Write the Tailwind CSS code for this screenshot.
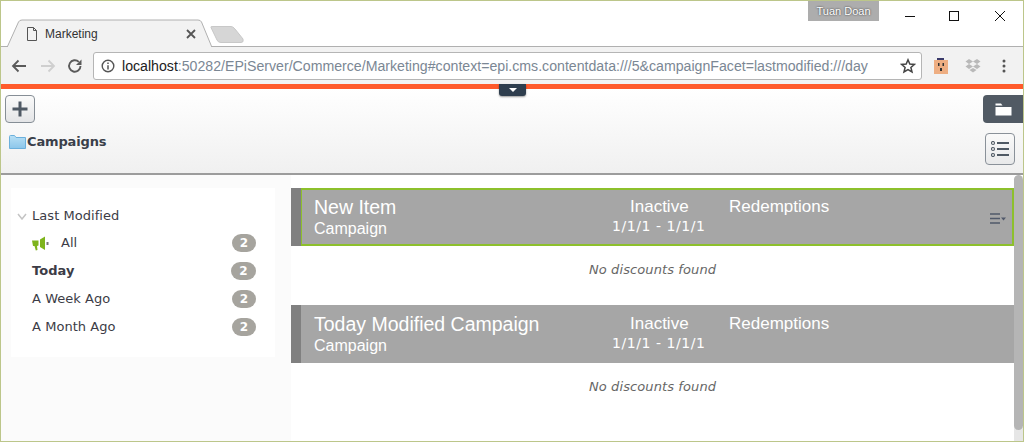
<!DOCTYPE html>
<html>
<head>
<script src="https://cdn.jsdelivr.net/npm/@tailwindcss/browser@4"></script>
</head>
<body class="m-0 overflow-hidden bg-white">
<div class="w-[1024px] h-[442px] flex flex-col border border-[#bcc68a] overflow-hidden relative font-['Liberation_Sans',sans-serif]">
  <!-- tab strip -->
  <div class="h-[46px] shrink-0 relative bg-white flex border-b border-[#b0b0b0]">
    <svg class="absolute left-0 top-[18px]" width="250" height="29" viewBox="0 0 250 29">
      <path d="M6 28.500 L17.500 3 Q18.500 1 21 1 L197 1 Q199.500 1 200.500 3 L211 28.500" fill="#f2f2f2" stroke="#b0b0b0"/>
      <path d="M210 8.500 Q209 7.500 212 7.500 L230 7.500 Q232 7.500 234 10 L242 20 Q243 23.500 240 23.500 L220 23.500 Q217 23.500 216 21 Z" fill="#d6d6d6" stroke="#c8c8c8"/>
    </svg>
    <div class="absolute left-[25px] top-[26px]">
      <svg width="12" height="14" viewBox="0 0 12 14"><path d="M1.500 .5 H7.500 L10.500 3.500 V13.500 H1.500 Z M7.500 .5 V3.500 H10.500" fill="none" stroke="#555"/></svg>
    </div>
    <span class="absolute left-[44px] top-[26px] text-[12px] leading-[15px] text-[#333]">Marketing</span>
    <svg class="absolute left-[185px] top-[28px]" width="10" height="10" viewBox="0 0 10 10"><path d="M1 1 L9 9 M9 1 L1 9" stroke="#555" stroke-width="1.800"/></svg>
    <div class="absolute left-[807px] top-0 w-[71px] h-[20px] bg-[#adadad] text-[11px] leading-[20px] text-center text-white [text-shadow:0_0_2px_#222]">Tuan Doan</div>
    <svg class="absolute left-[903px] top-[8px]" width="105" height="16" viewBox="0 0 105 16">
      <path d="M1 7.500 H11" stroke="#111"/>
      <rect x="45.500" y="2.500" width="9" height="9" fill="none" stroke="#111"/>
      <path d="M91 2 L101 12 M101 2 L91 12" stroke="#111"/>
    </svg>
  </div>
  <!-- toolbar -->
  <div class="h-[37px] shrink-0 bg-[#f2f2f2] flex items-center relative">
    <svg class="ml-[10px] shrink-0" width="16" height="14" viewBox="0 0 16 14"><path d="M15 7 H2 M7.500 1.500 L2 7 L7.500 12.500" fill="none" stroke="#5a5a5a" stroke-width="1.800"/></svg>
    <svg class="ml-[13px] shrink-0" width="16" height="14" viewBox="0 0 16 14"><path d="M1 7 H14 M8.500 1.500 L14 7 L8.500 12.500" fill="none" stroke="#cfcfcf" stroke-width="1.800"/></svg>
    <svg class="ml-[11px] shrink-0" width="16" height="16" viewBox="0 0 16 16"><path d="M13.500 8 A5.700 5.700 0 1 1 11.800 3.900" fill="none" stroke="#5a5a5a" stroke-width="1.900"/><path d="M14.500 1.500 V7 H9 Z" fill="#5a5a5a"/></svg>
    <div class="ml-[10px] w-[829px] h-[28px] shrink-0 bg-white border border-[#b5b5b5] rounded-[3px] flex items-center relative">
      <svg class="ml-[7px] shrink-0" width="14" height="14" viewBox="0 0 14 14"><circle cx="7" cy="7" r="5.800" fill="none" stroke="#555" stroke-width="1.400"/><path d="M7 6.200 V10.500 M7 3.500 V5" stroke="#555" stroke-width="1.500"/></svg>
      <span class="ml-[7px] text-[14.150px] leading-[16px] whitespace-nowrap text-[#7b8794]"><span class="text-[#222]">localhost</span>:50282/EPiServer/Commerce/Marketing#context=epi.cms.contentdata:///5&amp;campaignFacet=lastmodified:///day</span>
      <svg class="absolute right-[5px] top-[5px]" width="16" height="16" viewBox="0 0 16 16"><path d="M8 1.800 L9.800 6 L14.400 6.400 L10.900 9.400 L12 13.900 L8 11.500 L4 13.900 L5.100 9.400 L1.600 6.400 L6.200 6 Z" fill="none" stroke="#444" stroke-width="1.500"/></svg>
    </div>
    <svg class="ml-[11px] shrink-0" width="16" height="18" viewBox="0 0 16 18"><rect x="1" y="3" width="14" height="14" fill="#eeae82"/><rect x="4" y="1" width="7" height="2" fill="#3a3a6a"/><rect x="5" y="6" width="1.500" height="3" fill="#333"/><rect x="9.500" y="6" width="1.500" height="3" fill="#333"/><rect x="7" y="11" width="2" height="3" fill="#333"/></svg>
    <svg class="ml-[16px] shrink-0" width="16" height="16" viewBox="0 0 16 16"><path d="M4 1 L8 3.500 L4 6 L0.500 3.500 Z M12 1 L15.500 3.500 L12 6 L8 3.500 Z M4 6 L8 8.500 L4 11 L0.500 8.500 Z M12 6 L15.500 8.500 L12 11 L8 8.500 Z M4.500 12 L8 10 L11.500 12 L8 14.500 Z" fill="#b9b9b9"/></svg>
    <svg class="ml-[21px] shrink-0" width="4" height="14" viewBox="0 0 4 14"><circle cx="2" cy="2" r="1.500" fill="#555"/><circle cx="2" cy="7" r="1.500" fill="#555"/><circle cx="2" cy="12" r="1.500" fill="#555"/></svg>
  </div>
  <!-- orange bar -->
  <div class="h-[5px] shrink-0 bg-[#ff5a2b] relative z-10">
    <div class="absolute left-[498px] top-0 w-[27px] h-[12px] bg-[#2f3e4e] rounded-b-[3px] shadow-[0_1px_2px_rgba(0,0,0,0.4)] flex items-center justify-center">
      <div class="w-0 h-0 border-l-[4px] border-r-[4px] border-t-[4px] border-l-transparent border-r-transparent border-t-white"></div>
    </div>
  </div>
  <!-- page header -->
  <div class="h-[86px] shrink-0 border-b-2 border-[#9c9c9c] bg-gradient-to-b from-white to-[#f0f0f0] relative">
    <div class="absolute left-[4px] top-[6px] w-[30px] h-[28px] rounded-[4px] border border-[#868e96] bg-gradient-to-b from-[#fafafa] to-[#e4e5e7] flex items-center justify-center">
      <svg width="16" height="16" viewBox="0 0 16 16"><path d="M8 0.500 V15.500 M0.500 8 H15.500" stroke="#4f5964" stroke-width="3"/></svg>
    </div>
    <div class="absolute left-[8px] top-[44px] flex items-center h-[17px]">
      <svg width="17" height="14" viewBox="0 0 17 14"><defs><linearGradient id="fld" x1="0" y1="0" x2="0" y2="1"><stop offset="0" stop-color="#b9e0f5"/><stop offset="1" stop-color="#8cc6ea"/></linearGradient></defs><path d="M0.500 13.500 V1.500 Q0.500 .5 1.500 .5 H5.500 L7 2.500 H16.500 V13.500 Z" fill="url(#fld)" stroke="#6cb0dc"/></svg>
      <span class="ml-[1px] font-['DejaVu_Sans',sans-serif] font-bold text-[13px] tracking-[-0.15px] leading-[17px] text-[#3a3f4a]">Campaigns</span>
    </div>
    <div class="absolute left-[982px] top-[6px] w-[41px] h-[28px] bg-[#515a64] rounded-l-[4px] flex items-center justify-center">
      <svg width="17" height="13" viewBox="0 0 17 13"><path d="M0.500 2.500 V0.500 H6 L7.500 2.500 Z M0.500 4 H16.500 V12.500 H0.500 Z" fill="#fff"/></svg>
    </div>
    <div class="absolute left-[984px] top-[44px] w-[30px] h-[32px] rounded-[4px] border border-[#8a9199] bg-gradient-to-b from-[#fafafa] to-[#e8e9ea] flex items-center justify-center">
      <svg width="18" height="16" viewBox="0 0 18 16"><g fill="none" stroke="#4f5964" stroke-width="1.100"><circle cx="2" cy="2" r="1.500"/><circle cx="2" cy="8" r="1.500"/><circle cx="2" cy="14" r="1.500"/></g><path d="M6 2 H18 M6 8 H18 M6 14 H18" stroke="#4f5964" stroke-width="1.800"/></svg>
    </div>
  </div>
  <!-- body -->
  <div class="flex-1 min-h-0 flex bg-[#fbfbfb] relative">
    <aside class="w-[290px] shrink-0 pl-[10px] pr-[16px] pt-[13px]">
      <div class="h-[169px] bg-white pt-[18px] pl-[6px] pr-[19px] font-['DejaVu_Sans',sans-serif] text-[13px] tracking-[0.05px] text-[#3c3c46]">
        <div class="h-[20px] flex items-center">
          <svg width="10" height="7" viewBox="0 0 10 7"><path d="M1 1 L5 6 L9 1" fill="none" stroke="#c4c4c4" stroke-width="1.500"/></svg>
          <span class="ml-[5px]">Last Modified</span>
        </div>
        <div class="h-[28px] mt-[3px] flex items-center pl-[15px]">
          <svg class="shrink-0" width="17" height="15" viewBox="0 0 17 15"><path d="M0 4.500 H6.500 V9.500 L5 10 L5.500 14 L3.800 14.500 L2.500 10 H1 Z" fill="#7eb41c"/><path d="M8 3.500 L13 0.500 V14 L8 11 Z" fill="#7eb41c"/><rect x="14.500" y="6" width="2" height="3" fill="#777"/></svg>
          <span class="ml-[12px]">All</span>
          <span class="ml-auto w-[24px] h-[18px] rounded-full bg-[#a6a49e] text-white font-bold text-[12px] leading-[18px] text-center">2</span>
        </div>
        <div class="h-[28px] flex items-center pl-[15px]">
          <span class="font-bold">Today</span>
          <span class="ml-auto mr-0 w-[25px] h-[18px] rounded-full bg-[#a6a49e] text-white font-bold text-[12px] leading-[18px] text-center">2</span>
        </div>
        <div class="h-[28px] flex items-center pl-[15px]">
          <span>A Week Ago</span>
          <span class="ml-auto w-[24px] h-[18px] rounded-full bg-[#a6a49e] text-white font-bold text-[12px] leading-[18px] text-center">2</span>
        </div>
        <div class="h-[28px] flex items-center pl-[15px]">
          <span>A Month Ago</span>
          <span class="ml-auto w-[24px] h-[18px] rounded-full bg-[#a6a49e] text-white font-bold text-[12px] leading-[18px] text-center">2</span>
        </div>
      </div>
    </aside>
    <main class="w-[723px] shrink-0 bg-white pt-[13px]">
      <section class="h-[117px]">
        <div class="h-[58px] flex bg-[#a6a6a6]">
          <div class="w-[10px] shrink-0 bg-[#808080]"></div>
          <div class="flex-1 border-2 border-l-[1px] border-[#8dc02c] relative text-white">
            <div class="absolute left-[12px] top-[5px] text-[19.500px] leading-[24px]">New Item</div>
            <div class="absolute left-[12px] top-[30px] text-[16px] leading-[18px]">Campaign</div>
            <div class="absolute left-[328px] top-[7px] text-[17px] leading-[20px]">Inactive</div>
            <div class="absolute left-[310px] top-[27px] font-['DejaVu_Sans',sans-serif] text-[14px] tracking-[0.55px] leading-[18px]">1/1/1 - 1/1/1</div>
            <div class="absolute left-[427px] top-[7px] text-[17px] leading-[20px]">Redemptions</div>
            <svg class="absolute left-[688px] top-[23px]" width="16" height="11" viewBox="0 0 16 11"><path d="M0 1 H10 M0 5.500 H10 M0 10 H10" stroke="#50596a" stroke-width="1.600"/><path d="M11 4.500 H16 L13.500 7.500 Z" fill="#50596a"/></svg>
          </div>
        </div>
        <p class="pt-[15px] pl-[298px] font-['DejaVu_Sans',sans-serif] italic text-[13px] tracking-[0.1px] leading-[18px] text-[#666]">No discounts found</p>
      </section>
      <section>
        <div class="h-[58px] flex bg-[#a6a6a6]">
          <div class="w-[10px] shrink-0 bg-[#808080]"></div>
          <div class="flex-1 border-2 border-l-[1px] border-transparent relative text-white">
            <div class="absolute left-[12px] top-[5px] text-[19.500px] leading-[24px]">Today Modified Campaign</div>
            <div class="absolute left-[12px] top-[30px] text-[16px] leading-[18px]">Campaign</div>
            <div class="absolute left-[328px] top-[7px] text-[17px] leading-[20px]">Inactive</div>
            <div class="absolute left-[310px] top-[27px] font-['DejaVu_Sans',sans-serif] text-[14px] tracking-[0.55px] leading-[18px]">1/1/1 - 1/1/1</div>
            <div class="absolute left-[427px] top-[7px] text-[17px] leading-[20px]">Redemptions</div>
          </div>
        </div>
        <p class="pt-[15px] pl-[298px] font-['DejaVu_Sans',sans-serif] italic text-[13px] tracking-[0.1px] leading-[18px] text-[#666]">No discounts found</p>
      </section>
    </main>
    <div class="absolute left-[1013px] top-0 w-[9px] h-full bg-white flex flex-col">
      <div class="h-[255px] bg-[#b5b5b5] rounded-[5px] z-10"></div>
      <div class="flex-1 -mt-[5px] bg-[#e6e6e6] rounded-t-[3px]"></div>
    </div>
  </div>
</div>
</body>
</html>
